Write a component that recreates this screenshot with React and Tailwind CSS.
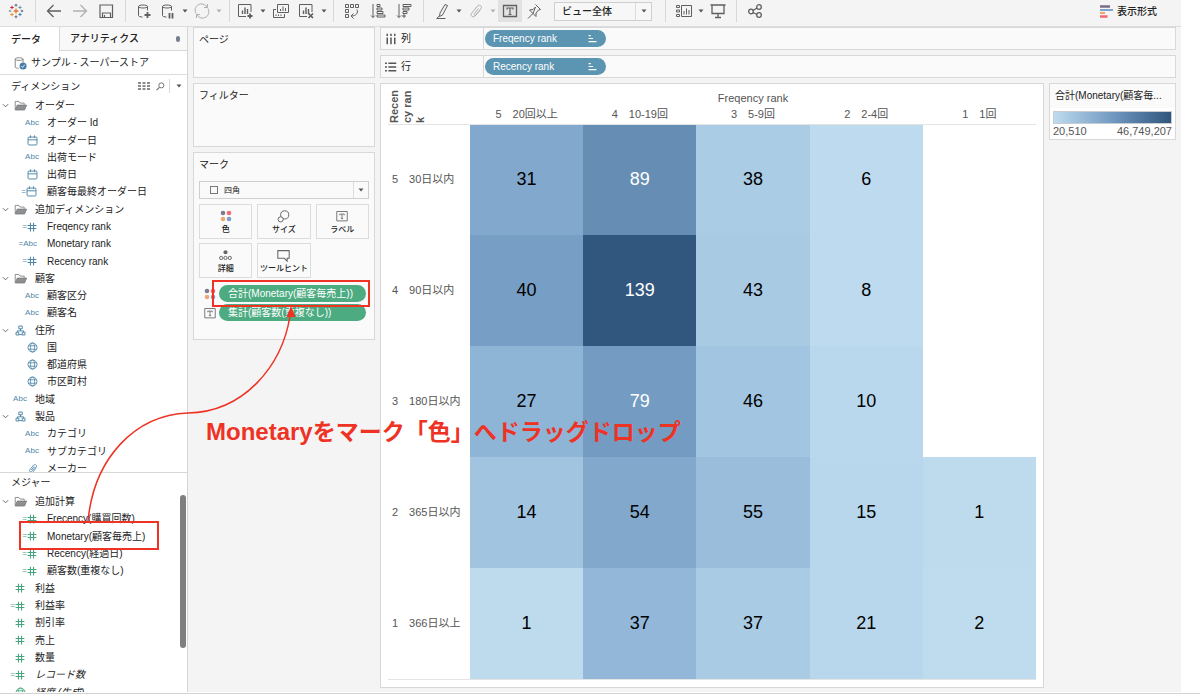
import React, { useState } from "react";
import clsx from "clsx";

const dimensions = [
  { label: "オーダー", icon: "folder", open: true },
  { label: "オーダー Id", icon: "abc", child: true },
  { label: "オーダー日", icon: "date", child: true },
  { label: "出荷モード", icon: "abc", child: true },
  { label: "出荷日", icon: "date", child: true },
  { label: "顧客毎最終オーダー日", icon: "date", child: true, calc: true },
  { label: "追加ディメンション", icon: "folder", open: true },
  { label: "Freqency rank", icon: "number", child: true, calc: true },
  { label: "Monetary rank", icon: "abc", child: true, calc: true },
  { label: "Recency rank", icon: "number", child: true, calc: true },
  { label: "顧客", icon: "folder", open: true },
  { label: "顧客区分", icon: "abc", child: true },
  { label: "顧客名", icon: "abc", child: true },
  { label: "住所", icon: "tree", open: true },
  { label: "国", icon: "globe", child: true },
  { label: "都道府県", icon: "globe", child: true },
  { label: "市区町村", icon: "globe", child: true },
  { label: "地域", icon: "abc" },
  { label: "製品", icon: "tree", open: true },
  { label: "カテゴリ", icon: "abc", child: true },
  { label: "サブカテゴリ", icon: "abc", child: true },
  { label: "メーカー", icon: "clip", child: true },
];

const measures = [
  { label: "追加計算", icon: "folder", open: true },
  { label: "Frecency(購買回数)", icon: "number", child: true, calc: true },
  { label: "Monetary(顧客毎売上)", icon: "number", child: true, calc: true },
  { label: "Recency(経過日)", icon: "number", child: true, calc: true },
  { label: "顧客数(重複なし)", icon: "number", child: true, calc: true },
  { label: "利益", icon: "number" },
  { label: "利益率", icon: "number", calc: true },
  { label: "割引率", icon: "number" },
  { label: "売上", icon: "number" },
  { label: "数量", icon: "number" },
  { label: "レコード数", icon: "number", calc: true, italic: true },
  { label: "経度 (生成)", icon: "globe", italic: true },
];

const columns = ["5　20回以上", "4　10-19回", "3　5-9回", "2　2-4回", "1　1回"];

const rows = [
  {
    label: "5　30日以内",
    cells: [
      [31, "bg-[#82a8cd] text-black"],
      [89, "bg-[#668db3] text-white"],
      [38, "bg-[#aacce5] text-black"],
      [6, "bg-[#bddaee] text-black"],
      null,
    ],
  },
  {
    label: "4　90日以内",
    cells: [
      [40, "bg-[#779ec4] text-black"],
      [139, "bg-[#32577e] text-white"],
      [43, "bg-[#a8cbe3] text-black"],
      [8, "bg-[#bddaee] text-black"],
      null,
    ],
  },
  {
    label: "3　180日以内",
    cells: [
      [27, "bg-[#8eb4d6] text-black"],
      [79, "bg-[#749bc1] text-white"],
      [46, "bg-[#a2c5e1] text-black"],
      [10, "bg-[#bad8ed] text-black"],
      null,
    ],
  },
  {
    label: "2　365日以内",
    cells: [
      [14, "bg-[#a1c4e0] text-black"],
      [54, "bg-[#82a8cb] text-black"],
      [55, "bg-[#9abddb] text-black"],
      [15, "bg-[#b8d7ed] text-black"],
      [1, "bg-[#bedbee] text-black"],
    ],
  },
  {
    label: "1　366日以上",
    cells: [
      [1, "bg-[#bedbee] text-black"],
      [37, "bg-[#92b7d8] text-black"],
      [37, "bg-[#a9cbe4] text-black"],
      [21, "bg-[#b8d6ec] text-black"],
      [2, "bg-[#bedcee] text-black"],
    ],
  },
];

// Small 16px line icon, children are the shapes
const Icon = ({ children, size = 16, className = "" }) => (
  <svg
    width={size}
    height={size}
    viewBox="0 0 16 16"
    fill="none"
    stroke="currentColor"
    strokeWidth="1"
    className={clsx("shrink-0", className)}
    aria-hidden="true"
  >
    {children}
  </svg>
);

const Caret = ({ className = "text-[#555]" }) => (
  <svg width="6" height="4" viewBox="0 0 6 4" className={className} aria-hidden="true">
    <path d="M0.5 0.5h5L3 3.5z" fill="currentColor" />
  </svg>
);

const Logo = () => {
  const cross = (x, y, r) => `M${x - r} ${y}h${2 * r}M${x} ${y - r}v${2 * r}`;
  return (
    <Icon>
      <path d={cross(8, 8, 2.4)} stroke="#e8762c" strokeWidth="1.3" />
      <path d={cross(4, 4.5, 1.7)} stroke="#c72037" />
      <path d={cross(12, 4.5, 1.7)} stroke="#7199a6" />
      <path d={cross(4, 11.5, 1.7)} stroke="#eb912c" />
      <path d={cross(12, 11.5, 1.7)} stroke="#59879b" />
      <path d={cross(8, 2.2, 1.4)} stroke="#5b6591" />
      <path d={cross(8, 13.8, 1.4)} stroke="#5b6591" />
      <path d={cross(2, 8, 1.2)} stroke="#7199a6" />
      <path d={cross(14, 8, 1.2)} stroke="#5b6591" />
    </Icon>
  );
};

const Database = () => (
  <path d="M2.5 3.5c0-2 9-2 9 0s-9 2-9 0v9c0 1 2 1.5 4 1.5M11.5 3.5v4" />
);

const Bars = () => <path d="M5.5 11V7.5M8 11V4.5M10.5 11V6" strokeWidth="1.4" />;

const FieldIcon = ({ icon, calc }) => {
  if (icon === "folder") {
    return (
      <Icon size={13} className="text-[#777]">
        <path d="M1.5 13V3h4.500l1.500 2h5v2" />
        <path d="M1.5 13.5L4 7.5h11.500l-2.500 6z" fill="#8d9194" />
      </Icon>
    );
  }
  return (
    <>
      {calc && <span className="text-[8px] leading-none">=</span>}
      {icon === "abc" && <span className="text-[8px] leading-none">Abc</span>}
      {icon === "date" && (
        <Icon size={11}>
          <rect x="1.5" y="3" width="13" height="11.5" rx="1.5" strokeWidth="1.4" />
          <path d="M1.5 7h13M5 0.5v4M11 0.5v4" strokeWidth="1.4" />
        </Icon>
      )}
      {icon === "number" && (
        <Icon size={10}>
          <path d="M5.5 1v14M10.5 1v14M1 5.5h14M1 10.5h14" strokeWidth="1.7" />
        </Icon>
      )}
      {icon === "tree" && (
        <Icon size={11}>
          <path
            d="M5.5 1.5h5v4h-5zM8 5.5v3M3.5 10.5v-2h9v2M1.5 10.5h4v4h-4zM10.5 10.5h4v4h-4zM5.5 14h5"
            strokeWidth="1.4"
          />
        </Icon>
      )}
      {icon === "globe" && (
        <Icon size={11}>
          <circle cx="8" cy="8" r="6.5" strokeWidth="1.3" />
          <ellipse cx="8" cy="8" rx="3" ry="6.5" strokeWidth="1.2" />
          <path d="M2 5.5h12M2 10.5h12" strokeWidth="1.2" />
        </Icon>
      )}
      {icon === "clip" && (
        <Icon size={11}>
          <path
            d="M12 6l-5 6c-2 2-4.500 0-3-2l5.500-7c2-2 5.500 0 4 3l-5 7.500M10.500 5L6 10.500"
            strokeWidth="1.2"
          />
        </Icon>
      )}
    </>
  );
};

const FieldRow = ({ field, color }) => (
  <li className="flex min-h-0 items-center whitespace-nowrap">
    <span className={clsx("flex shrink-0 justify-center", field.child ? "w-[23px]" : "w-[11px]")}>
      {field.open && (
        <Icon size={7} className="text-[#555]">
          <path d="M2 5l6 6 6-6" strokeWidth="2" />
        </Icon>
      )}
    </span>
    <span
      className={clsx("flex w-[18px] shrink-0 items-center", color, field.calc ? "justify-end pr-1" : "justify-center")}
    >
      <FieldIcon icon={field.icon} calc={field.calc} />
    </span>
    <span className={clsx("pl-1.5", field.italic && "italic")}>{field.label}</span>
  </li>
);

const Tool = ({ label, active, dim, children }) => (
  <button
    type="button"
    aria-label={label}
    className={clsx(
      "flex h-[22px] w-6 shrink-0 items-center justify-center",
      active && "bg-[#e2e2e2]",
      dim ? "text-[#b0b0b0]" : "text-[#5f5f5f]"
    )}
  >
    <Icon>{children}</Icon>
  </button>
);

const ToolCaret = ({ label, dim }) => (
  <button type="button" aria-label={label} className="flex h-[22px] w-2.5 shrink-0 items-center justify-center">
    <Caret className={dim ? "text-[#b0b0b0]" : "text-[#555]"} />
  </button>
);

const Toolbar = () => {
  const [fit, setFit] = useState("ビュー全体");

  return (
    <header className="flex h-[27px] shrink-0 border-b border-[#dcdcdc] pb-1">
      <div className="flex w-9 shrink-0 items-center border-r border-[#d8d8d8] pl-2">
        <Logo />
      </div>
      <div className="flex w-[90px] shrink-0 items-center gap-0.5 border-r border-[#d8d8d8] pl-1.5">
        <Tool label="元に戻す">
          <path d="M15 8H1.5M7.5 2L1.5 8l6 6" strokeWidth="1.3" />
        </Tool>
        <Tool label="やり直し" dim>
          <path d="M1 8h13.500M8.500 2l6 6-6 6" strokeWidth="1.3" />
        </Tool>
        <Tool label="保存">
          <path d="M2 2h12.500v12.500H2zM4.500 14.500V10h8v4.500M6.500 14.500V12" strokeWidth="1.2" />
        </Tool>
      </div>
      <div className="flex w-[104px] shrink-0 items-center border-r border-[#d8d8d8] pl-1.5">
        <Tool label="新しいデータソース">
          <Database />
          <path d="M11.5 9v6M8.5 12h6" strokeWidth="1.8" />
        </Tool>
        <Tool label="自動更新の一時停止">
          <Database />
          <path d="M9.5 10v5.500M12.500 10v5.500" strokeWidth="1.8" />
        </Tool>
        <ToolCaret label="自動更新メニュー" />
        <Tool label="更新の実行" dim>
          <path d="M2 10.500A6.300 6.300 0 0 1 13 4M14 5.500A6.300 6.300 0 0 1 3 12M13.500 1v3.500H10M2.500 15v-3.500H6" />
        </Tool>
        <ToolCaret label="更新メニュー" dim />
      </div>
      <div className="flex w-[104px] shrink-0 items-center gap-px border-r border-[#d8d8d8] pl-[3px]">
        <Tool label="新しいワークシート">
          <path d="M9 13.500H1.500v-12h12.500V9" />
          <Bars />
          <path d="M13 10.500v5M10.500 13h5" strokeWidth="1.8" />
        </Tool>
        <ToolCaret label="新しいワークシートメニュー" />
        <Tool label="複製">
          <path d="M4.500 1.500h11v8h-11zM7.500 8V6M10 8V3.500M12.500 8V5" />
          <path d="M3 6.500H0.500v8h11V11M3 13v-1.500M5.500 13v-1.500M8 13v-1.500" />
        </Tool>
        <Tool label="シートのクリア">
          <path d="M9 13.500H1.500v-12h12.500V9" />
          <Bars />
          <path d="M10.500 10.500l4.500 4.500M15 10.500l-4.500 4.500" strokeWidth="1.7" />
        </Tool>
        <ToolCaret label="クリアメニュー" />
      </div>
      <div className="flex w-[90px] shrink-0 items-center gap-0.5 border-r border-[#d8d8d8] pl-1.5">
        <Tool label="行と列の交換">
          <path d="M1.500 1.500h3v3h-3zM6.500 1.500h3v3h-3zM11.500 1.500h3v3h-3zM1.500 6.500h3v3h-3zM1.500 11.500h3v3h-3zM13 6.500c1.500 3.500-1 6.500-5.500 6.500M9.500 10.500L7 13l2.500 2.500" />
        </Tool>
        <Tool label="昇順で並べ替え">
          <path d="M3 1v13.500M1 12.500l2 2 2-2M7 1.500h3v2H7zM7 5h5v2H7zM7 8.500h6v2H7zM7 12h8v2H7z" />
        </Tool>
        <Tool label="降順で並べ替え">
          <path d="M3 1v13.500M1 12.500l2 2 2-2M7 1.500h8v2H7zM7 5h6v2H7zM7 8.500h4v2H7zM7 12h2v2H7z" />
        </Tool>
      </div>
      <div className="flex w-[242px] shrink-0 items-center border-r border-[#d8d8d8] pl-1.5">
        <Tool label="ハイライト">
          <path d="M11 1.500l2.500 1-5 9.500-3 1.500 0.500-3.500zM2.500 15.500h9M3 15l2.500-2" />
        </Tool>
        <ToolCaret label="ハイライトメニュー" />
        <Tool label="メンバーのグループ化" dim>
          <path d="M12.500 6.500L7 13c-2 2-5 0-3.500-2.500L9.500 3c2-2 5 0 3.500 2.500l-5 6.500c-1 1-2.500 0-1.500-1.500l4-5" />
        </Tool>
        <ToolCaret label="グループメニュー" dim />
        <Tool label="マークラベルの表示" active>
          <path d="M1.500 2.500h13v11h-13z" strokeWidth="1.3" />
          <path d="M5 6.500V5h6v1.500M8 5v6.500M6.500 11.500h3" strokeWidth="1.2" />
        </Tool>
        <Tool label="軸の修正">
          <path d="M9.500 1.500l5 5-2 0.500-2.500 3v3.500l-3-3-5 5M7 10.500L3.500 7l3.500-0.500L9.500 4z" />
        </Tool>
        <label className="relative ml-2 flex h-[19px] w-[98px] items-center border border-[#cfcfcf] bg-[#f7f7f7]">
          <span className="sr-only">サイズ調整</span>
          <select
            value={fit}
            onChange={(e) => setFit(e.target.value)}
            className="h-full w-full appearance-none pl-[7px] leading-[17px] font-medium outline-none"
          >
            <option>標準</option>
            <option>ビュー全体</option>
          </select>
          <span className="pointer-events-none absolute right-0 flex h-full w-4 items-center justify-center border-l border-[#dcdcdc]">
            <Caret />
          </span>
        </label>
      </div>
      <div className="flex w-[71px] shrink-0 items-center border-r border-[#d8d8d8] pl-1.5">
        <Tool label="カードの表示/非表示">
          <path d="M5.500 2.500h10v11h-10zM8 11.500V8M10.500 11.500v-6M13 11.500V7" />
          <path d="M0.500 2.500h3v2h-3zM0.500 7h3v2h-3zM0.500 11.500h3v2h-3z" />
        </Tool>
        <ToolCaret label="カードメニュー" />
        <Tool label="プレゼンテーションモード">
          <path d="M0.500 2h15M2 2v8.500h12V2M8 10.500V14M5 14.500h6" strokeWidth="1.3" />
        </Tool>
      </div>
      <div className="flex items-center pl-1.5">
        <Tool label="共有">
          <circle cx="4" cy="8.5" r="2.3" strokeWidth="1.3" />
          <circle cx="12" cy="4" r="2.3" strokeWidth="1.3" />
          <circle cx="12" cy="12" r="2.3" strokeWidth="1.3" />
          <path d="M6 7.500L10 5M6 9.500l4 2" strokeWidth="1.3" />
        </Tool>
      </div>
      <button type="button" className="mr-6 ml-auto flex items-center gap-1 font-medium whitespace-nowrap">
        <svg width="13" height="13" viewBox="0 0 13 13" aria-hidden="true">
          <path d="M0 1.500h10" stroke="#7b6b8d" strokeWidth="2.5" />
          <path d="M0 5h13" stroke="#7fa3cc" strokeWidth="2" />
          <path d="M0 8h5" stroke="#f0a46c" strokeWidth="2" />
          <path d="M0 11.500h7.500" stroke="#f0686e" strokeWidth="2.5" />
        </svg>
        表示形式
      </button>
    </header>
  );
};

const Sidebar = () => (
  <aside className="flex w-[188px] shrink-0 flex-col border-r border-[#d4d4d4] bg-white">
    <div className="flex h-6 shrink-0 font-medium">
      <button type="button" className="w-[60px] border-r border-[#d8d8d8] pl-[11px] text-left">
        データ
      </button>
      <button
        type="button"
        className="flex flex-1 items-center justify-between border-b border-[#d8d8d8] bg-[#f8f8f8] pr-[7px] pl-[10px]"
      >
        アナリティクス
        <span className="h-[6px] w-1 rounded-full bg-[#777f8c]" />
      </button>
    </div>
    <div className="flex h-6 shrink-0 items-center gap-1 border-b border-[#dcdcdc] pl-[13px]">
      <Icon size={14} className="text-[#777]">
        <Database />
        <circle cx="11.5" cy="11.5" r="4" fill="#4a7eaa" stroke="none" />
        <path d="M9.500 11.500l1.500 1.500 2.500-3" stroke="#fff" />
      </Icon>
      サンプル - スーパーストア
    </div>

    <div className="flex h-[22px] shrink-0 items-center pl-[11px]">
      <h2 className="flex-1">ディメンション</h2>
      <button type="button" aria-label="データの表示" className="mr-1.5 text-[#666]">
        <svg width="12" height="8" viewBox="0 0 12 8" aria-hidden="true">
          <path d="M0 1h12M0 4h12M0 7h12" stroke="currentColor" strokeWidth="1.6" strokeDasharray="3 1.5" />
        </svg>
      </button>
      <button type="button" aria-label="検索" className="mr-1 text-[#666]">
        <Icon size={9}>
          <circle cx="9.5" cy="6" r="4.5" strokeWidth="1.6" />
          <path d="M6 9.500l-5 5" strokeWidth="1.8" />
        </Icon>
      </button>
      <button
        type="button"
        aria-label="ディメンションメニュー"
        className="flex h-[14px] w-[18px] items-center justify-center border-l border-[#d8d8d8]"
      >
        <Caret />
      </button>
    </div>
    <div className="h-[375px] shrink-0 overflow-hidden">
      <ul className="grid h-[380px] auto-rows-fr">
        {dimensions.map((field) => (
          <FieldRow key={field.label} field={field} color="text-[#4f87a8]" />
        ))}
      </ul>
    </div>

    <h2 className="h-[21px] shrink-0 border-t border-[#d8d8d8] pl-[11px] leading-5">メジャー</h2>
    <div className="flex h-[200px] min-h-0 flex-1 overflow-hidden">
      <ul className="grid h-[208px] flex-1 auto-rows-fr">
        {measures.map((field) => (
          <FieldRow key={field.label} field={field} color="text-[#45a57c]" />
        ))}
      </ul>
      <div className="mt-0.5 mr-px h-[153px] w-1.5 rounded-full bg-[#7f7f7f]" />
    </div>
  </aside>
);

const ColorDots = () => (
  <svg width="12" height="12" viewBox="0 0 12 12" className="shrink-0" aria-hidden="true">
    <circle cx="3" cy="3" r="2.3" fill="#7d7b91" />
    <circle cx="9" cy="3" r="2.3" fill="#ef6d75" />
    <circle cx="3" cy="9" r="2.3" fill="#eea878" />
    <circle cx="9" cy="9" r="2.3" fill="#7d9fc8" />
  </svg>
);

const LabelIcon = () => (
  <Icon size={12} className="text-[#777]">
    <path d="M1 2h14v12.500H1zM5 7V5.500h6V7M8 5.500v6M6.500 11.500h3" strokeWidth="1.3" />
  </Icon>
);

const MarkButton = ({ label, children }) => (
  <button
    type="button"
    className="flex h-[35px] flex-col items-center justify-between border border-[#dcdcdc] pt-[5px] pb-0.5 text-[8px] font-medium whitespace-nowrap"
  >
    <span className="flex h-3 items-center">{children}</span>
    <span className="leading-3">{label}</span>
  </button>
);

const Cards = () => {
  const [mark, setMark] = useState("四角");

  return (
    <div className="flex w-[182px] shrink-0 flex-col gap-[5px]">
      <section className="h-[51px] border border-[#d8d8d8] bg-[#fafafa] px-[5px] pt-1">
        <h2>ページ</h2>
      </section>
      <section className="h-[64px] border border-[#d8d8d8] bg-[#fafafa] px-[5px] pt-1">
        <h2>フィルター</h2>
      </section>
      <section className="h-[188px] border border-[#d8d8d8] bg-[#fafafa] px-[5px] pt-1">
        <h2>マーク</h2>
        <label className="relative mt-[9px] flex h-[18px] items-center border border-[#cfcfcf]">
          <span className="sr-only">マークタイプ</span>
          <span className="absolute left-[10px] h-2 w-2 border border-[#777]" />
          <select
            value={mark}
            onChange={(e) => setMark(e.target.value)}
            className="h-full w-full appearance-none pl-6 text-[8px] outline-none"
          >
            <option>自動</option>
            <option>四角</option>
          </select>
          <span className="pointer-events-none absolute right-0 flex h-full w-[15px] items-center justify-center border-l border-[#dcdcdc]">
            <Caret />
          </span>
        </label>
        <div className="mt-[5px] grid grid-cols-3 gap-x-[5px] gap-y-1">
          <MarkButton label="色">
            <ColorDots />
          </MarkButton>
          <MarkButton label="サイズ">
            <Icon size={13} className="text-[#666]">
              <circle cx="9.5" cy="6" r="5" strokeWidth="1.2" />
              <circle cx="4.5" cy="11.5" r="3.2" strokeWidth="1.2" fill="#fafafa" />
            </Icon>
          </MarkButton>
          <MarkButton label="ラベル">
            <LabelIcon />
          </MarkButton>
          <MarkButton label="詳細">
            <Icon size={13} className="text-[#666]">
              <circle cx="8" cy="4" r="2.5" fill="currentColor" stroke="none" />
              <circle cx="2.7" cy="11" r="2" strokeWidth="1.2" />
              <circle cx="8" cy="11" r="2" strokeWidth="1.2" />
              <circle cx="13.3" cy="11" r="2" strokeWidth="1.2" />
            </Icon>
          </MarkButton>
          <MarkButton label="ツールヒント">
            <Icon size={13} className="text-[#666]">
              <path d="M1 2h14v9.500h-2.500V15L9 11.500H1z" strokeWidth="1.3" />
            </Icon>
          </MarkButton>
        </div>
        <ul className="mt-[7px] flex flex-col gap-0.5 pr-[3px] pl-[5px] text-white">
          <li className="flex items-center gap-[3px]">
            <ColorDots />
            <span className="h-[17px] flex-1 rounded-full bg-[#4cab81] pl-[9px] leading-[17px] whitespace-nowrap">
              合計(Monetary(顧客毎売上))
            </span>
          </li>
          <li className="flex items-center gap-[3px]">
            <LabelIcon />
            <span className="h-[17px] flex-1 rounded-full bg-[#4cab81] pl-[9px] leading-[17px] whitespace-nowrap">
              集計(顧客数(重複なし))
            </span>
          </li>
        </ul>
      </section>
    </div>
  );
};

const Shelf = ({ label, field, children }) => (
  <div className="flex h-[23px] shrink-0 items-center border border-[#d8d8d8] bg-[#fafafa]">
    <div className="flex h-full w-[103px] items-center gap-1 border-r border-[#d8d8d8] pl-1">
      <Icon size={12} className="text-[#555]">
        {children}
      </Icon>
      {label}
    </div>
    <div className="ml-px flex h-[17px] w-[121px] items-center justify-between rounded-full bg-[#5b95b1] pr-[9px] pl-2 text-white">
      {field}
      <Icon size={9}>
        <path d="M1 3h4M1 8h8M1 13.500h14" strokeWidth="2.2" />
      </Icon>
    </div>
  </div>
);

const HeatMap = () => (
  <table className="w-full table-fixed text-[11px] leading-[13px] text-[#555]">
    <colgroup>
      <col className="w-[82px]" />
      {columns.map((column) => (
        <col key={column} />
      ))}
    </colgroup>
    <thead>
      <tr className="h-[21px]">
        <th rowSpan={2} className="border-b border-[#e4e4e4] p-0 align-bottom">
          <div className="rotate-180 text-left [writing-mode:vertical-rl]">
            Recen
            <br />
            cy ran
            <br />k
          </div>
        </th>
        <th colSpan={5} className="p-0 align-bottom font-normal">
          Freqency rank
        </th>
      </tr>
      <tr className="h-[19px]">
        {columns.map((column) => (
          <th key={column} className="border-b border-[#e4e4e4] p-0 font-normal">
            {column}
          </th>
        ))}
      </tr>
    </thead>
    <tbody>
      {rows.map((row) => (
        <tr key={row.label} className="h-[111px] last:border-b last:border-[#e4e4e4]">
          <th className="p-0 pl-1 text-left font-normal whitespace-nowrap">{row.label}</th>
          {row.cells.map((cell, i) => (
            <td key={i} className={clsx("p-0 text-center text-[18px]", cell && cell[1])}>
              {cell && cell[0]}
            </td>
          ))}
        </tr>
      ))}
    </tbody>
  </table>
);

const Legend = () => (
  <section className="w-[127px] shrink-0 self-start border border-[#d8d8d8] bg-white">
    <h2 className="h-6 truncate bg-[#fafafa] px-[5px] leading-6">合計(Monetary(顧客毎...</h2>
    <div className="px-[3px] pt-[3px]">
      <div className="h-[13px] border border-[#c8ccd0] bg-linear-to-r from-[#bedcef] via-[#7299c1] to-[#30567e]" />
      <div className="flex justify-between text-[11px] leading-[15px] text-[#555]">
        <span>20,510</span>
        <span>46,749,207</span>
      </div>
    </div>
  </section>
);

// Red callout drawn on top of the workspace
const Callout = () => (
  <div className="pointer-events-none absolute inset-0 text-[#ee3224]">
    <svg width="700" height="560" viewBox="0 0 700 560" fill="none" stroke="currentColor" aria-hidden="true">
      <rect x="20" y="522" width="138" height="27" strokeWidth="2" />
      <rect x="213" y="281" width="156" height="25" strokeWidth="2" />
      <path d="M88 521C94 458 135 415 188 413C244 412 282 366 290 316" strokeWidth="1.5" />
      <path d="M291 306l4.500 11h-9z" fill="currentColor" stroke="none" />
    </svg>
    <p className="absolute top-[418px] left-[206px] text-[23px] leading-7 font-bold whitespace-nowrap">
      <span className="text-2xl leading-7">Monetary</span>をマーク「色」へドラッグドロップ
    </p>
  </div>
);

const App = () => {
  return (
    <div
      lang="ja"
      className="relative flex h-screen flex-col overflow-hidden border-b border-[#d4d4d4] bg-white pr-[19px] pb-px font-['Liberation_Sans','Noto_Sans_CJK_JP',sans-serif] text-[10px] leading-[15px] text-[#222]"
    >
      <div className="flex min-h-0 flex-1 flex-col bg-[#f4f4f4]">
        <Toolbar />
        <main className="flex min-h-0 flex-1 gap-[5px]">
          <Sidebar />
          <Cards />
          <div className="flex min-w-0 flex-1 flex-col gap-[5px] pr-[5px] pb-1">
            <Shelf label="列" field="Freqency rank">
              <path d="M3 1v3M8 1v3M13 1v3M3 6v9M8 6v9M13 6v9" strokeWidth="2" />
            </Shelf>
            <Shelf label="行" field="Recency rank">
              <path d="M0 3h2.500M0 8h2.500M0 13h2.500M4.500 3H15M4.500 8H15M4.500 13H15" strokeWidth="1.7" />
            </Shelf>
            <div className="flex min-h-0 flex-1 gap-[5px]">
              <section className="min-w-0 flex-1 border border-[#d8d8d8] bg-white px-[7px]">
                <HeatMap />
              </section>
              <Legend />
            </div>
          </div>
        </main>
      </div>
      <Callout />
    </div>
  );
};

export default App;
